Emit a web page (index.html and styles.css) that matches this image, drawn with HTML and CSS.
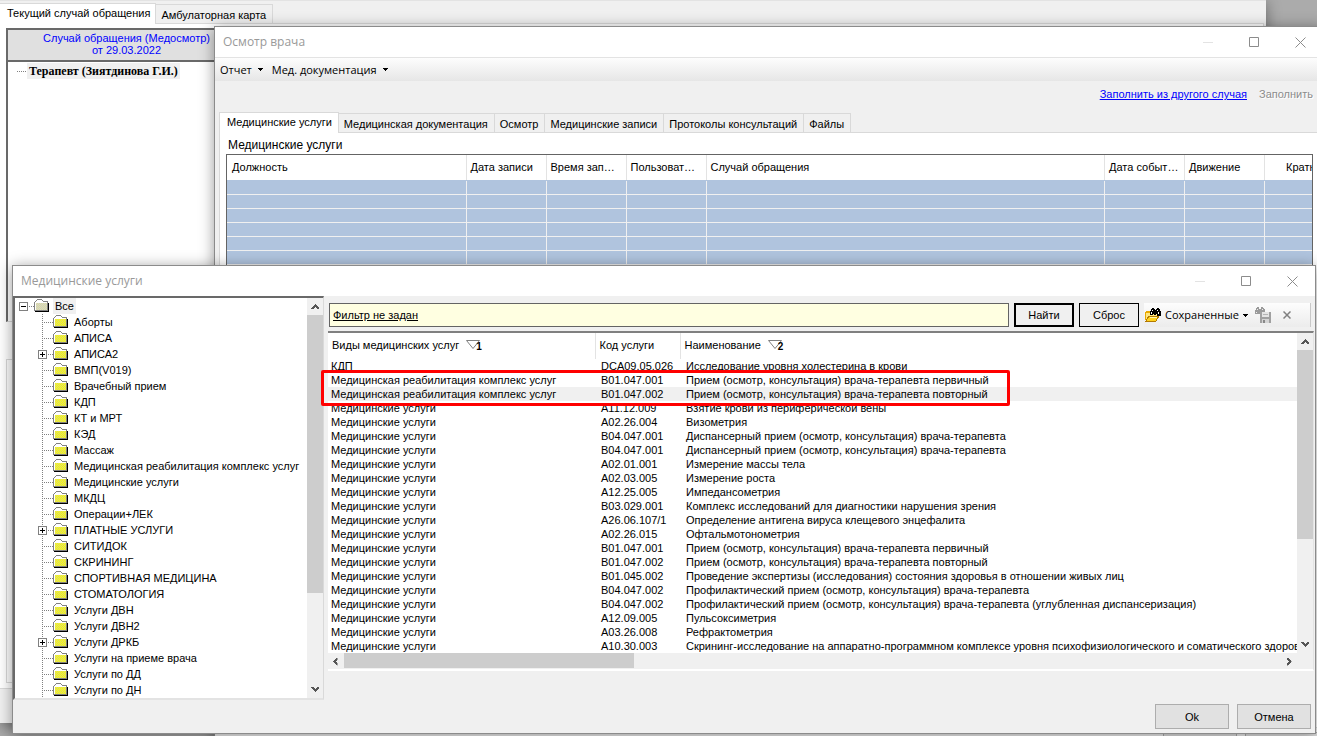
FILE: index.html
```html
<!DOCTYPE html>
<html lang="ru">
<head>
    <meta charset="UTF-8">
    <meta name="viewport" content="width=device-width, initial-scale=1.0">
    <title>Медицинские услуги</title>
    <link rel="stylesheet" href="styles.css">
</head>
<body>

    <svg class="sprite" aria-hidden="true">
        <defs>
            <pattern id="dither" width="2" height="2" patternUnits="userSpaceOnUse">
                <rect width="2" height="2" fill="#ffff00"/>
                <rect width="1" height="1" fill="#d4d480"/>
                <rect x="1" y="1" width="1" height="1" fill="#d4d480"/>
            </pattern>
            <pattern id="dither-open" width="2" height="2" patternUnits="userSpaceOnUse">
                <rect width="2" height="2" fill="#e8e8a0"/>
                <rect width="1" height="1" fill="#c8c8c8"/>
                <rect x="1" y="1" width="1" height="1" fill="#c8c8c8"/>
            </pattern>
            <symbol id="folder" viewBox="0 0 16 16">
                <path d="M1 14h14V5h-1v8H1z" fill="#000"/>
                <path d="M0 4h1V3h1V2h1V1h5v1h1v1h5v10H0z" fill="#808080"/>
                <path d="M1 4h1V3h1V2h5v1h1v1h4v8H1z" fill="#fff"/>
                <path d="M2 5h11v7H2z" fill="url(#dither)"/>
            </symbol>
            <symbol id="folder-root" viewBox="0 0 16 16">
                <path d="M1 14h14V5h-1v8H1z" fill="#000"/>
                <path d="M0 4h1V3h1V2h1V1h5v1h1v1h5v10H0z" fill="#808080"/>
                <path d="M1 4h1V3h1V2h5v1h1v1h4v8H1z" fill="#fff"/>
                <path d="M2 5h11v7H2z" fill="url(#dither-open)"/>
            </symbol>
            <symbol id="plus" viewBox="0 0 9 9">
                <path d="M0 0h9v9H0z" fill="#808080"/>
                <path d="M1 1h7v7H1z" fill="#fff"/>
                <path d="M2 4h5v1H2zM4 2h1v5H4z" fill="#000"/>
            </symbol>
            <symbol id="minus" viewBox="0 0 9 9">
                <path d="M0 0h9v9H0z" fill="#808080"/>
                <path d="M1 1h7v7H1z" fill="#fff"/>
                <path d="M2 4h5v1H2z" fill="#000"/>
            </symbol>
            <symbol id="minimize" viewBox="0 0 11 11"><path d="M0 5h10v1H0z" fill="#e3e3e3"/></symbol>
            <symbol id="maximize" viewBox="0 0 11 11"><path d="M.5.5h9v9h-9z" fill="none" stroke="#8c8c8c"/></symbol>
            <symbol id="close" viewBox="0 0 11 11"><path d="M.5.5l10 10M10.5.5l-10 10" stroke="#8c8c8c"/></symbol>
            <symbol id="caret" viewBox="0 0 5 3"><path d="M0 0h5v1H4v1H3v1H2V2H1V1H0z" fill="#000"/></symbol>
            <symbol id="arrow" viewBox="0 0 8 5"><path d="M0 4l4-4 4 4v1H6L4 3 2 5H0z" fill="#555"/></symbol>
            <symbol id="sort" viewBox="0 0 14 9"><path d="M.5.5h13L7 8.500z" fill="#fff" stroke="#808080"/></symbol>
        </defs>
    </svg>

    <div class="window case-window">
        <div class="tabs" role="tablist">
            <button class="tab active" role="tab">Текущий случай обращения</button>
            <button class="tab" role="tab">Амбулаторная карта</button>
        </div>
        <div class="case-page">
            <div class="case-header">Случай обращения (Медосмотр)<br>от 29.03.2022</div>
            <div class="case-tree"><div class="case-item"><span>Терапевт (Зиятдинова Г.И.)</span></div></div>
            <div class="case-group"></div>
        </div>
    </div>

    <div class="window exam-window">
        <div class="titlebar">
            <span class="title">Осмотр врача</span>
            <button class="control" aria-label="Свернуть"><svg><use href="#minimize"/></svg></button>
            <button class="control" aria-label="Развернуть"><svg><use href="#maximize"/></svg></button>
            <button class="control" aria-label="Закрыть"><svg><use href="#close"/></svg></button>
        </div>
        <div class="menubar">
            <button class="menu">Отчет <svg class="caret"><use href="#caret"/></svg></button>
            <button class="menu">Мед. документация <svg class="caret"><use href="#caret"/></svg></button>
        </div>
        <div class="fill-links">
            <a href="#" class="fill-link">Заполнить из другого случая</a>
            <a class="fill-link disabled">Заполнить</a>
        </div>
        <div class="tabs" role="tablist">
            <button class="tab active" role="tab">Медицинские услуги</button>
            <button class="tab" role="tab">Медицинская документация</button>
            <button class="tab" role="tab">Осмотр</button>
            <button class="tab" role="tab">Медицинские записи</button>
            <button class="tab" role="tab">Протоколы консультаций</button>
            <button class="tab" role="tab">Файлы</button>
        </div>
        <div class="exam-page">
            <div class="caption">Медицинские услуги</div>
            <div class="records-box">
                <table class="records">
                    <colgroup>
                        <col class="col-post"><col class="col-short"><col class="col-short"><col class="col-short"><col>
                        <col class="col-short"><col class="col-short"><col class="col-count">
                    </colgroup>
                    <thead>
                        <tr>
                            <th>Должность</th><th>Дата записи</th><th>Время записи</th><th>Пользователь</th>
                            <th>Случай обращения</th><th>Дата события</th><th>Движение</th><th class="count">Кратность</th>
                        </tr>
                    </thead>
                    <tbody>
                        <tr><td></td><td></td><td></td><td></td><td></td><td></td><td></td><td></td></tr>
                        <tr><td></td><td></td><td></td><td></td><td></td><td></td><td></td><td></td></tr>
                        <tr><td></td><td></td><td></td><td></td><td></td><td></td><td></td><td></td></tr>
                        <tr><td></td><td></td><td></td><td></td><td></td><td></td><td></td><td></td></tr>
                        <tr><td></td><td></td><td></td><td></td><td></td><td></td><td></td><td></td></tr>
                        <tr><td></td><td></td><td></td><td></td><td></td><td></td><td></td><td></td></tr>
                        <tr><td></td><td></td><td></td><td></td><td></td><td></td><td></td><td></td></tr>
                    </tbody>
                </table>
            </div>
        </div>
        <div class="footer">
            <button class="push" aria-label="Сохранить"></button>
            <button class="push" aria-label="Выход"></button>
        </div>
    </div>

    <div class="window picker-window">
        <div class="titlebar">
            <span class="title">Медицинские услуги</span>
            <button class="control" aria-label="Свернуть"><svg><use href="#minimize"/></svg></button>
            <button class="control" aria-label="Развернуть"><svg><use href="#maximize"/></svg></button>
            <button class="control" aria-label="Закрыть"><svg><use href="#close"/></svg></button>
        </div>

        <div class="picker-body">
            <div class="tree-box">
                <ul class="tree">
                    <li class="node root"><button class="expander" aria-label="Свернуть узел"><svg><use href="#minus"/></svg></button><svg class="folder"><use href="#folder-root"/></svg><span class="label selected">Все</span></li>
                    <li class="node"><svg class="folder"><use href="#folder"/></svg><span class="label">Аборты</span></li>
                    <li class="node"><svg class="folder"><use href="#folder"/></svg><span class="label">АПИСА</span></li>
                    <li class="node"><button class="expander" aria-label="Развернуть узел"><svg><use href="#plus"/></svg></button><svg class="folder"><use href="#folder"/></svg><span class="label">АПИСА2</span></li>
                    <li class="node"><svg class="folder"><use href="#folder"/></svg><span class="label">ВМП(V019)</span></li>
                    <li class="node"><svg class="folder"><use href="#folder"/></svg><span class="label">Врачебный прием</span></li>
                    <li class="node"><svg class="folder"><use href="#folder"/></svg><span class="label">КДП</span></li>
                    <li class="node"><svg class="folder"><use href="#folder"/></svg><span class="label">КТ и МРТ</span></li>
                    <li class="node"><svg class="folder"><use href="#folder"/></svg><span class="label">КЭД</span></li>
                    <li class="node"><svg class="folder"><use href="#folder"/></svg><span class="label">Массаж</span></li>
                    <li class="node"><svg class="folder"><use href="#folder"/></svg><span class="label">Медицинская реабилитация комплекс услуг</span></li>
                    <li class="node"><svg class="folder"><use href="#folder"/></svg><span class="label">Медицинские услуги</span></li>
                    <li class="node"><svg class="folder"><use href="#folder"/></svg><span class="label">МКДЦ</span></li>
                    <li class="node"><svg class="folder"><use href="#folder"/></svg><span class="label">Операции+ЛЕК</span></li>
                    <li class="node"><button class="expander" aria-label="Развернуть узел"><svg><use href="#plus"/></svg></button><svg class="folder"><use href="#folder"/></svg><span class="label">ПЛАТНЫЕ УСЛУГИ</span></li>
                    <li class="node"><svg class="folder"><use href="#folder"/></svg><span class="label">СИТИДОК</span></li>
                    <li class="node"><svg class="folder"><use href="#folder"/></svg><span class="label">СКРИНИНГ</span></li>
                    <li class="node"><svg class="folder"><use href="#folder"/></svg><span class="label">СПОРТИВНАЯ МЕДИЦИНА</span></li>
                    <li class="node"><svg class="folder"><use href="#folder"/></svg><span class="label">СТОМАТОЛОГИЯ</span></li>
                    <li class="node"><svg class="folder"><use href="#folder"/></svg><span class="label">Услуги ДВН</span></li>
                    <li class="node"><svg class="folder"><use href="#folder"/></svg><span class="label">Услуги ДВН2</span></li>
                    <li class="node"><button class="expander" aria-label="Развернуть узел"><svg><use href="#plus"/></svg></button><svg class="folder"><use href="#folder"/></svg><span class="label">Услуги ДРКБ</span></li>
                    <li class="node"><svg class="folder"><use href="#folder"/></svg><span class="label">Услуги на приеме врача</span></li>
                    <li class="node"><svg class="folder"><use href="#folder"/></svg><span class="label">Услуги по ДД</span></li>
                    <li class="node"><svg class="folder"><use href="#folder"/></svg><span class="label">Услуги по ДН</span></li>
                </ul>
                <div class="scroll-v">
                    <svg class="arrow up"><use href="#arrow"/></svg>
                    <div class="track"><div class="thumb tree-thumb"></div></div>
                    <svg class="arrow down"><use href="#arrow"/></svg>
                </div>
            </div>

            <div class="services">
                <div class="filter-row">
                    <div class="filter"><a href="#">Фильтр не задан</a></div>
                    <button class="find">Найти</button>
                    <button class="reset">Сброс</button>
                    <div class="toolstrip">
                        <button class="tool">
                            <svg class="icon" viewBox="0 0 16 16">
                                <path d="M0 5h1V4h4v1h2v9H1v-1H0z" fill="#e8a800"/>
                                <path d="M1 6h5v1h6v2H4L1 13z" fill="#ffe680"/>
                                <path d="M6 2h1V1h2v1h1v1h1V2h1V1h2v1h1v2h1v5h-4V7h-1v1H9V7H8v1H5V4h1z" fill="#000"/>
                                <path d="M7 3h1v1H7zM12 3h1v1h-1zM6 5h1v2H6zM13 5h1v2h-1z" fill="#fff"/>
                                <path d="M1 14l3-5h10l-3 5z" fill="#ffd21e" stroke="#b37a00"/>
                                <path d="M5 10h7v1H5z" fill="#fff7b0"/>
                            </svg>
                            Сохраненные
                            <svg class="caret"><use href="#caret"/></svg>
                        </button>
                        <button class="tool" aria-label="Сохранить фильтр">
                            <svg class="icon" viewBox="0 0 16 16">
                                <path d="M1 1h1V0h2v2h2V0h2v1h1v1h1v5H6V5H5v2H0V3h1z" fill="#9a9a9a"/>
                                <path d="M2 2h1v1H2zM7 2h1v1H7zM1 5h1v1H1z" fill="#eee"/>
                                <path d="M5 5h10l1 1v10H5z" fill="#a0a0a0"/>
                                <path d="M7 5h7v5H7z" fill="#e4e4e4"/>
                                <path d="M8 7h5v1H8z" fill="#b4b4b4"/>
                                <path d="M7 12h7v4H7z" fill="#d4d4d4"/>
                                <path d="M8 13h2v3H8z" fill="#888"/>
                            </svg>
                        </button>
                        <button class="tool" aria-label="Удалить фильтр">
                            <svg class="cross" viewBox="0 0 8 8"><path d="M.5.5l7 7M7.500.5l-7 7" stroke="#808080" stroke-width="1.500"/></svg>
                        </button>
                    </div>
                </div>

                <div class="grid-box">
                    <div class="grid-view">
                        <table class="grid">
                            <colgroup><col class="col-kind"><col class="col-code"><col></colgroup>
                            <thead>
                                <tr>
                                    <th>Виды медицинских услуг <span class="sort"><svg><use href="#sort"/></svg><b>1</b></span></th>
                                    <th>Код услуги</th>
                                    <th>Наименование <span class="sort"><svg><use href="#sort"/></svg><b>2</b></span></th>
                                </tr>
                            </thead>
                            <tbody>
                                <tr><td>КДП</td><td>DCA09.05.026</td><td>Исследование уровня холестерина в крови</td></tr>
                                <tr><td>Медицинская реабилитация комплекс услуг</td><td>B01.047.001</td><td>Прием (осмотр, консультация) врача-терапевта первичный</td></tr>
                                <tr class="current"><td>Медицинская реабилитация комплекс услуг</td><td>B01.047.002</td><td>Прием (осмотр, консультация) врача-терапевта повторный</td></tr>
                                <tr><td>Медицинские услуги</td><td>A11.12.009</td><td>Взятие крови из периферической вены</td></tr>
                                <tr><td>Медицинские услуги</td><td>A02.26.004</td><td>Визометрия</td></tr>
                                <tr><td>Медицинские услуги</td><td>B04.047.001</td><td>Диспансерный прием (осмотр, консультация) врача-терапевта</td></tr>
                                <tr><td>Медицинские услуги</td><td>B04.047.001</td><td>Диспансерный прием (осмотр, консультация) врача-терапевта</td></tr>
                                <tr><td>Медицинские услуги</td><td>A02.01.001</td><td>Измерение массы тела</td></tr>
                                <tr><td>Медицинские услуги</td><td>A02.03.005</td><td>Измерение роста</td></tr>
                                <tr><td>Медицинские услуги</td><td>A12.25.005</td><td>Импедансометрия</td></tr>
                                <tr><td>Медицинские услуги</td><td>B03.029.001</td><td>Комплекс исследований для диагностики нарушения зрения</td></tr>
                                <tr><td>Медицинские услуги</td><td>A26.06.107/1</td><td>Определение антигена вируса клещевого энцефалита</td></tr>
                                <tr><td>Медицинские услуги</td><td>A02.26.015</td><td>Офтальмотонометрия</td></tr>
                                <tr><td>Медицинские услуги</td><td>B01.047.001</td><td>Прием (осмотр, консультация) врача-терапевта первичный</td></tr>
                                <tr><td>Медицинские услуги</td><td>B01.047.002</td><td>Прием (осмотр, консультация) врача-терапевта повторный</td></tr>
                                <tr><td>Медицинские услуги</td><td>B01.045.002</td><td>Проведение экспертизы (исследования) состояния здоровья в отношении живых лиц</td></tr>
                                <tr><td>Медицинские услуги</td><td>B04.047.002</td><td>Профилактический прием (осмотр, консультация) врача-терапевта</td></tr>
                                <tr><td>Медицинские услуги</td><td>B04.047.002</td><td>Профилактический прием (осмотр, консультация) врача-терапевта (углубленная диспансеризация)</td></tr>
                                <tr><td>Медицинские услуги</td><td>A12.09.005</td><td>Пульсоксиметрия</td></tr>
                                <tr><td>Медицинские услуги</td><td>A03.26.008</td><td>Рефрактометрия</td></tr>
                                <tr><td>Медицинские услуги</td><td>A10.30.003</td><td>Скрининг-исследование на аппаратно-программном комплексе уровня психофизиологического и соматического здоровья</td></tr>
                            </tbody>
                        </table>
                        <div class="scroll-v">
                            <svg class="arrow up"><use href="#arrow"/></svg>
                            <div class="track"><div class="thumb grid-thumb"></div></div>
                            <svg class="arrow down"><use href="#arrow"/></svg>
                        </div>
                    </div>
                    <div class="scroll-h">
                        <svg class="arrow left"><use href="#arrow"/></svg>
                        <div class="track"><div class="thumb"></div></div>
                        <svg class="arrow right"><use href="#arrow"/></svg>
                    </div>
                    <div class="marker"></div>
                </div>
            </div>
        </div>

        <div class="footer">
            <button class="push">Ok</button>
            <button class="push">Отмена</button>
        </div>
    </div>

</body>
</html>
```

FILE: styles.css
```css
* {
    box-sizing: border-box;
}

body {
    margin: 0;
    height: 100vh;
    position: relative;
    overflow: hidden;
    background: #ababab;
    color: #000;
    font-family: "Liberation Sans", Arial, sans-serif;
    font-size: 11px;
    line-height: 14px;
}

button {
    margin: 0;
    padding: 0;
    border: none;
    background: none;
    color: inherit;
    font: inherit;
    white-space: nowrap;
}

svg {
    display: block;
    flex: none;
    shape-rendering: crispEdges;
}

.sprite {
    position: absolute;
    width: 0;
    height: 0;
}

/* Windows */
.window {
    position: absolute;
    background: #f0f0f0;
    box-shadow: 0 2px 14px rgba(0, 0, 0, 0.4);
}

.titlebar {
    display: flex;
    flex: none;
    align-items: center;
    height: 30px;
    padding-left: 8px;
    background: #fff;
    color: #999;
    font-family: "Open Sans", "Noto Sans", sans-serif;
    font-size: 12px;
}

.title {
    flex: 1;
}

.control {
    display: flex;
    justify-content: center;
    width: 46px;
}

.control svg {
    width: 11px;
    height: 11px;
    shape-rendering: auto;
}

.caret {
    width: 5px;
    height: 3px;
}

/* Tabs */
.tabs {
    display: flex;
    flex: none;
    align-items: flex-end;
}

.tab {
    height: 19px;
    padding: 1px 6px 0 5px;
    border: 1px solid #d9d9d9;
    border-width: 1px 1px 0 0;
}

.tab.active {
    position: relative;
    height: 21px;
    margin-bottom: -1px;
    padding: 0 6px 2px 7px;
    border-left-width: 1px;
    background: #fff;
}

/* Patient case */
.case-window {
    left: 0;
    top: 0;
    right: 51px;
    bottom: 13px;
    padding-top: 2px;
    border-top: 1px solid #e3e3e3;
}

.case-window .tab.active {
    padding: 0 5px 2px 7px;
    border-left: none;
}

.case-page {
    height: 666px;
    margin-right: 2px;
    padding: 4px 0 0 6px;
    border: 1px solid #d9d9d9;
    border-left: none;
    background: #fff;
}

.case-header {
    width: 239px;
    height: 34px;
    padding-top: 2px;
    border: 2px solid #696969;
    border-right: none;
    background: #e0e0e0;
    color: #0000ff;
    line-height: 12px;
    text-align: center;
}

.case-tree {
    width: 239px;
    height: 260px;
    padding: 1px 0 0 9px;
    border-left: 2px solid #696969;
    border-bottom: 1px solid #d9d9d9;
}

.case-item {
    display: flex;
    align-items: center;
    gap: 1px;
    font-family: "Liberation Serif", "Times New Roman", serif;
    font-size: 12px;
    font-weight: bold;
    line-height: 16px;
}

.case-item span {
    padding: 0 2px;
    background: #f0f0f0;
}

.case-item::before {
    content: "";
    width: 9px;
    border-top: 1px dotted #808080;
}

.case-group {
    width: 239px;
    height: 324px;
    margin-top: 37px;
    border: 1px solid #d9d9d9;
}

/* Examination */
.exam-window {
    left: 214px;
    top: 26px;
    right: -7px;
    bottom: -26px;
    display: flex;
    flex-direction: column;
    border: 1px solid #8b8b8b;
}

.menubar {
    display: flex;
    flex: none;
    gap: 9px;
    height: 24px;
    padding-left: 5px;
    border-top: 1px solid #e3e3e3;
    background: linear-gradient(#fdfdfd, #e6e6e6);
    font-family: "Open Sans", "Noto Sans", sans-serif;
    font-size: 11px;
}

.menu {
    display: flex;
    align-items: center;
    gap: 6px;
}

.fill-links {
    display: flex;
    flex: none;
    justify-content: flex-end;
    gap: 12px;
    height: 31px;
    padding: 6px 10px 0 0;
}

.fill-link {
    color: #0000ff;
}

.fill-link.disabled {
    color: #8c8c8c;
    text-shadow: 1px 1px #fff;
}

.exam-window .tabs {
    padding-left: 4px;
}

.exam-page {
    flex: 1;
    margin-left: 4px;
    padding: 4px 9px 0 6px;
    border: 1px solid #d9d9d9;
    background: #fff;
}

.caption {
    padding: 0 2px 1px;
    font-size: 12px;
    line-height: 16px;
}

.records-box {
    height: 400px;
    overflow: hidden;
    border: 1px solid #646464;
}

.records {
    width: calc(100% + 53px);
    table-layout: fixed;
    border-collapse: collapse;
}

.col-post { width: 239px; }
.col-short { width: 80px; }
.col-count { width: 100px; }

.records th {
    height: 25px;
    padding: 0 5px 0 4px;
    overflow: hidden;
    border-right: 1px solid #e3e3e3;
    border-bottom: 1px solid #b0c4de;
    font-weight: normal;
    text-align: left;
    text-overflow: ellipsis;
    white-space: nowrap;
}

.records th:first-child {
    padding-left: 5px;
}

.records th.count {
    padding-left: 21px;
}

.records td {
    height: 14px;
    padding: 0;
    border: 1px solid #f0f0f0;
    border-left: none;
    background: #b0c4de;
}

/* Service picker */
.picker-window {
    left: 12px;
    top: 265px;
    right: 1px;
    border: 1px solid #8b8b8b;
}

.picker-body {
    display: grid;
    grid-template-columns: 311px minmax(0, 1fr);
    align-items: start;
}

.tree-box {
    display: flex;
    border: solid #d9d9d9;
    border-width: 2px 1px;
    border-top-color: #696969;
    border-left: 2px solid #696969;
    border-bottom-color: #e3e3e3;
    background: #fff;
}

.tree {
    flex: 1;
    margin: 0;
    padding: 0;
    list-style: none;
}

.node {
    display: flex;
    align-items: center;
    height: 16px;
    padding-left: 38px;
    background:
        repeating-linear-gradient(#808080 0 1px, transparent 1px 2px) 27px 0 / 1px 100% no-repeat,
        repeating-linear-gradient(90deg, #808080 0 1px, transparent 1px 2px) 29px 8px / 9px 1px no-repeat;
    white-space: nowrap;
}

.node.root {
    padding-left: 19px;
    background: repeating-linear-gradient(90deg, #808080 0 1px, transparent 1px 2px) 14px 8px / 5px 1px no-repeat;
}

.expander {
    margin: 0 6px 0 -15px;
}

.expander svg {
    width: 9px;
    height: 9px;
}

.folder {
    width: 16px;
    height: 16px;
}

.label {
    margin-left: 3px;
    padding: 0 2px;
    line-height: 16px;
}

.label.selected {
    background: #f0f0f0;
}

/* Scrollbars */
.scroll-v {
    display: flex;
    flex-direction: column;
    align-items: center;
    width: 16px;
    padding: 6px 0;
    background: #f0f0f0;
}

.scroll-h {
    display: flex;
    align-items: center;
    height: 16px;
    padding: 0 20px 0 3px;
    background: #f0f0f0;
}

.track {
    flex: 1;
    align-self: stretch;
}

.scroll-v .track {
    margin: 6px 0;
}

.scroll-h .track {
    margin: 0 5px;
}

.thumb {
    background: #cdcdcd;
}

.tree-thumb {
    height: 76%;
}

.grid-thumb {
    height: 66%;
}

.scroll-h .thumb {
    width: 31%;
    height: 15px;
}

.arrow {
    width: 8px;
    height: 5px;
}

.arrow.down { transform: rotate(180deg); }
.arrow.left { transform: rotate(-90deg); }
.arrow.right { transform: rotate(90deg); }

/* Filter */
.services {
    padding: 7px 1px 0 4px;
}

.filter-row {
    display: flex;
    gap: 5px;
    height: 24px;
    padding: 0 3px 0 1px;
}

.filter {
    flex: 1;
    padding: 4px 3px;
    border: 1px solid #646464;
    background: #ffffe1;
}

.filter a {
    color: #000;
}

.find,
.reset {
    width: 60px;
    border: 1px solid #000;
}

.find {
    border-width: 2px;
}

.toolstrip {
    display: flex;
    align-items: center;
    gap: 7px;
    width: 167px;
    padding-left: 1px;
    border-right: 1px solid #c8c8c8;
    background: linear-gradient(#fdfdfd, #ececec);
    font-family: "Open Sans", "Noto Sans", sans-serif;
}

.tool {
    display: flex;
    align-items: center;
    gap: 4px;
}

.icon {
    width: 16px;
    height: 16px;
}

.cross {
    width: 8px;
    height: 8px;
    margin-left: 5px;
    shape-rendering: auto;
}

/* Services grid */
.grid-box {
    position: relative;
    margin-top: 4px;
    border-top: 2px solid #808080;
    border-right: 1px solid #e3e3e3;
    border-bottom: 2px solid #fff;
}

.grid-view {
    display: flex;
    background: #fff;
}

.grid {
    flex: 1;
    min-width: 0;
    width: 100%;
    table-layout: fixed;
    border-collapse: collapse;
}

.col-kind { width: 267px; }
.col-code { width: 85px; }

.grid th {
    height: 26px;
    padding: 0 4px 2px;
    border-right: 1px solid #e3e3e3;
    font-weight: normal;
    text-align: left;
    white-space: nowrap;
}

.grid th:last-child {
    border-right: none;
}

.grid td {
    height: 14px;
    padding: 0 0 0 6px;
    overflow: hidden;
    white-space: nowrap;
}

.grid td:first-child {
    padding-left: 3px;
}

.grid .current {
    background: #f0f0f0;
}

.sort {
    display: inline-flex;
    margin-left: 4px;
    vertical-align: middle;
}

.sort svg {
    width: 14px;
    height: 9px;
    shape-rendering: auto;
}

.sort b {
    margin-left: -4px;
    padding-top: 2px;
    font-size: 10px;
    line-height: 10px;
}

/* Highlight round the two rows to choose from */
.marker {
    position: absolute;
    left: -7px;
    top: 37px;
    width: 689px;
    height: 36px;
    border: 3px solid #ff0000;
    border-radius: 2px;
    pointer-events: none;
}

/* Bottom buttons */
.footer {
    display: flex;
    flex: none;
    justify-content: flex-end;
    gap: 8px;
    padding: 4px;
}

.push {
    width: 74px;
    height: 25px;
    border: 1px solid #adadad;
    background: #e1e1e1;
}
```
